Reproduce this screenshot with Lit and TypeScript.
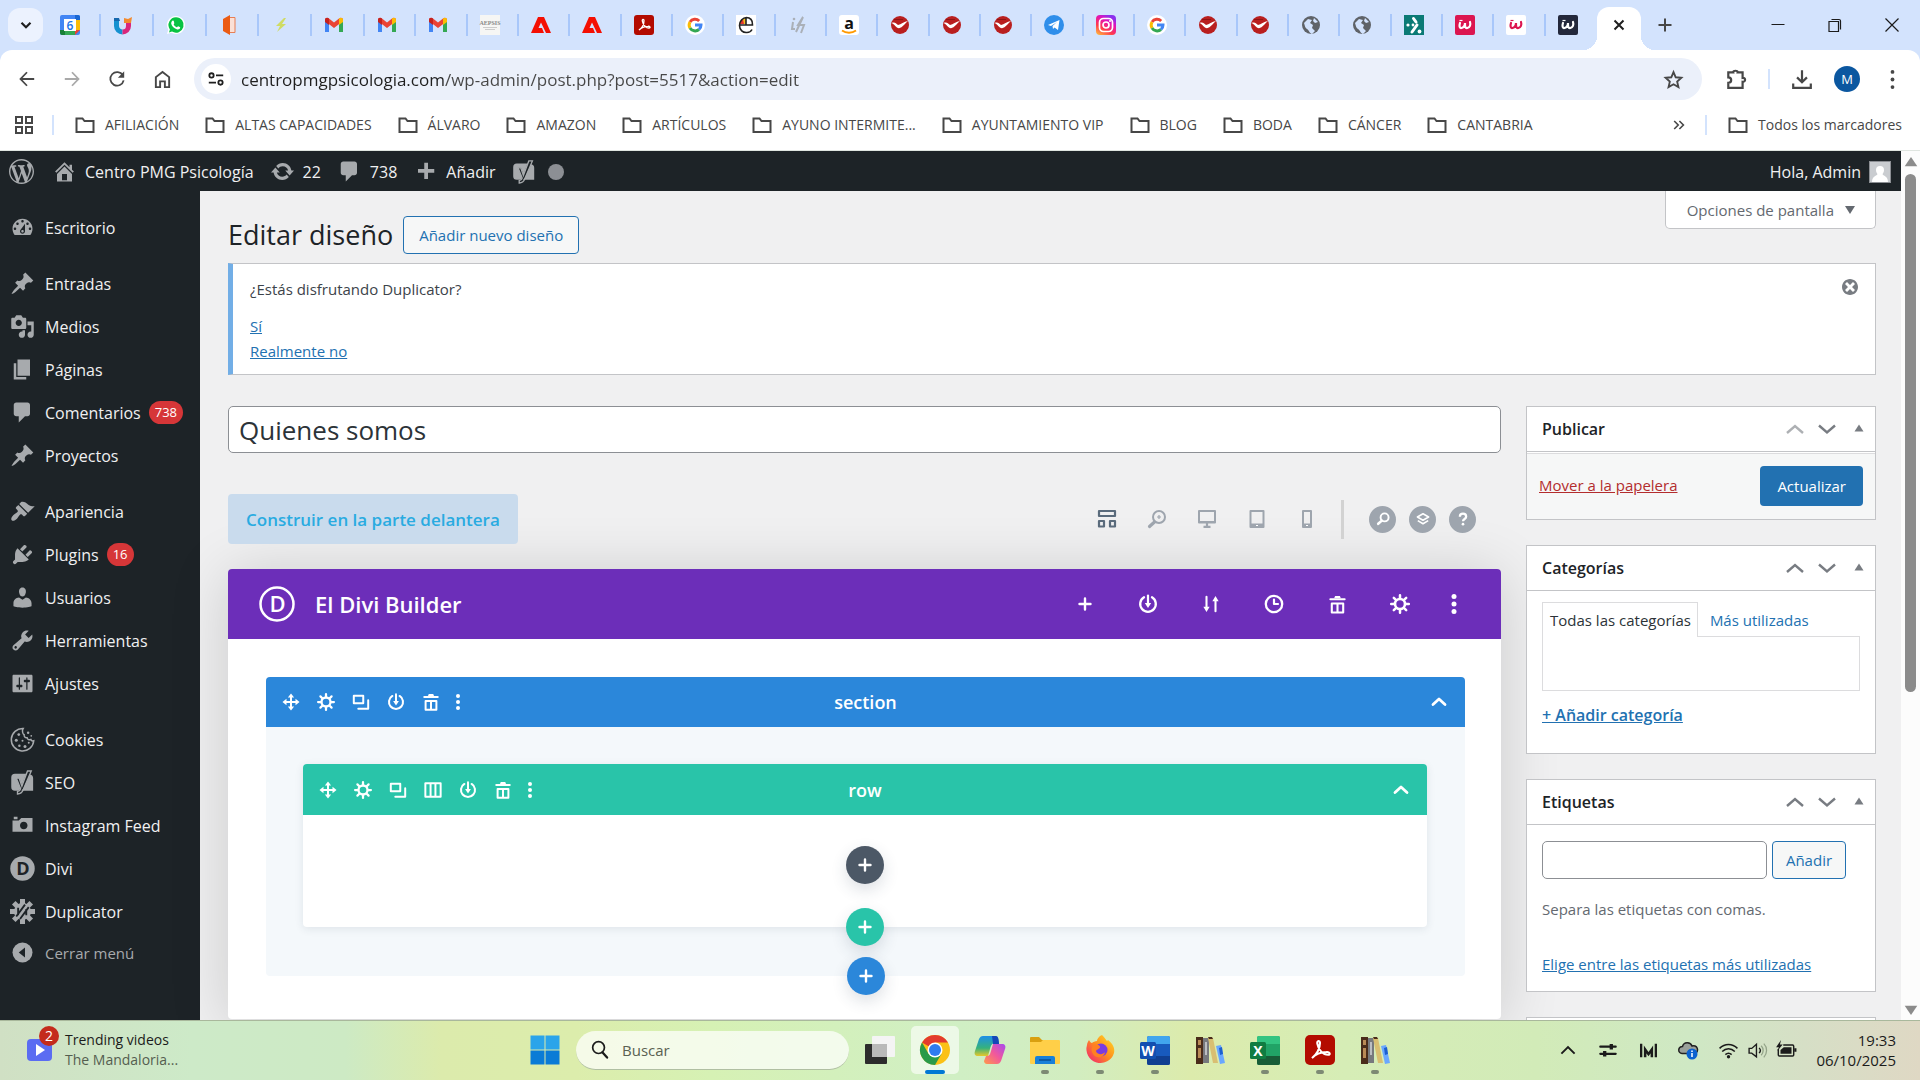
import { LitElement, html, svg, css, TemplateResult } from "lit";
import { customElement, state } from "lit/decorators.js";

type Shape = unknown;

const icon = (body: Shape, size = 20, box = 20): TemplateResult =>
  html`<svg width=${size} height=${size} viewBox="0 0 ${box} ${box}" fill="currentColor" aria-hidden="true">${body}</svg>`;

const p = (d: string) => svg`<path d=${d} fill-rule="evenodd"/>`;
const line = (d: string, w = 2) =>
  svg`<path d=${d} fill="none" stroke="currentColor" stroke-width=${w}/>`;
const round = (d: string, w = 2) =>
  svg`<path d=${d} fill="none" stroke="currentColor" stroke-width=${w} stroke-linecap="round" stroke-linejoin="round"/>`;

/* ---------- favicons, drawn in a 20 x 20 box ---------- */
const gmail = svg`<path d="M1 17V5l4 3v9H2z" fill="#4285f4"/><path d="M19 17V5l-4 3v9h3z" fill="#34a853"/><path d="M1 5c0-2 2-3 4-1.500l5 4 5-4C17 2 19 3 19 5v1l-9 7-9-7z" fill="#ea4335"/><path d="M15 3.500C17 2 19 3 19 5v2l-4 3z" fill="#fbbc04"/><path d="M5 3.500C3 2 1 3 1 5v2l4 3z" fill="#c5221f"/>`;
const adobe = svg`<path d="M0 18 7 2h6l7 16h-5L10 7.500 7.500 13H11l2 5z" fill="#f40f02"/>`;
const swirl = (x: string, y: string, d: string) => svg`<path d=${d} fill="none" stroke="#fff" stroke-width="1.300" transform="translate(${x} ${y})"/>`;
const acroCurve = "M5 14C8 12 10 8 10 4.500 10 3 8 3 8.300 5 9 9 12 12 15 12c2 0 1-2-1-1.700C10 10.500 7 12 5 14z";
const acrobat = svg`<rect width="20" height="20" rx="3" fill="#b30b00"/>${swirl("0", "1", acroCurve)}`;
const google = svg`<circle cx="10" cy="10" r="10" fill="#fff"/><g fill="none" stroke-width="3"><path d="M14.200 6A6 6 0 0 0 5 7" stroke="#ea4335"/><path d="M5 7a6 6 0 0 0 0 6" stroke="#fbbc04"/><path d="M5 13a6 6 0 0 0 9 1.500" stroke="#34a853"/><path d="M14 14.500A6 6 0 0 0 16 10h-6" stroke="#4285f4"/></g>`;
const redSwoosh = svg`<circle cx="10" cy="10" r="9" fill="#b91f1f"/><path d="M1.500 8C5 6.500 6.500 9 8 10c3-.5 6-3.500 10-4-3 2.500-5.500 6.500-9 7.200C6 13.200 4.500 9 1.500 8z" fill="#fff"/><path d="M4 4.500h9" stroke="#8f1414"/>`;
const globe = svg`<circle cx="10" cy="10" r="9" fill="#5f6368"/><path d="M3 8l4-4 4 1-2 3 3 2-1 3 3 3-3 3c-2 0-3-4-5-5S4 11 3 8zM13 3l4 4-3 1-2-2z" fill="#d3e3fd"/>`;
const wTile = (bg: string, fg: string) => svg`<rect width="20" height="20" rx="2" fill=${bg}/><path d="M5 8c-1 3-.5 5.500 1.500 5S10 11 10 8c-.2 3 .3 5.500 2.300 5C14.800 12.400 16 10 15 7" fill="none" stroke=${fg} stroke-width="2.200" stroke-linecap="round"/><path d="M4.500 5.500h3" stroke=${fg} stroke-width="1.200"/>`;

const favicons: [string, Shape][] = [
  ["Calendario", svg`<rect width="20" height="20" rx="2" fill="#4285f4"/><path d="M15 0h3a2 2 0 0 1 2 2v3h-5z" fill="#1967d2"/><path d="M15 5h5v10h-5z" fill="#fbbc04"/><path d="M5 15h10v5H5z" fill="#34a853"/><path d="M0 15h5v5H2a2 2 0 0 1-2-2z" fill="#188038"/><path d="M15 15h5l-5 5z" fill="#ea4335"/><path d="M4 4h12v12H4z" fill="#fff"/><text x="10" y="14.500" font-size="12" font-weight="600" text-anchor="middle" font-family="Open Sans,sans-serif" fill="#1a73e8">6</text>`],
  ["Uned", svg`<path d="M3.500 3v8a6 6 0 0 0 6 6" fill="none" stroke="#1591d0" stroke-width="5"/><path d="M9.500 17a6 6 0 0 0 6-6V8" fill="none" stroke="#d9277b" stroke-width="5"/><path d="M11 8V3l4 1 4-2-1 6z" fill="#f28a2e"/><path d="M1 3h5l1 3H1z" fill="#1668ad"/>`],
  ["WhatsApp", svg`<path d="M10 1a9 9 0 1 1-4.500 16.800L1 19l1.300-4.300A9 9 0 0 1 10 1z" fill="#fff"/><path d="M10 2.300a7.700 7.700 0 1 1-4 14.300l-3 .8.900-3A7.700 7.700 0 0 1 10 2.300z" fill="#08c343"/><path d="M7 5.500c1 0 1 2 1.300 2.500S7.500 9 7.700 9.500c.8 1.500 1.800 2.300 3 2.800.5 0 1-1.200 1.500-1.100l2 1c0 2-2 2.500-3.500 2C8 13.500 5.500 11 5.200 8.500 5.200 7 6 5.500 7 5.500z" fill="#fff"/>`],
  ["Office", svg`<path d="M4 4l7-4v20l-7-4z" fill="#eb5b13"/><path d="M11 2.500h5v15h-5" fill="#fbe0d6" stroke="#e77f55"/>`],
  ["Rayo", svg`<path d="M13 3 5 11h4l-3 6 9-8h-4l4-6z" fill="#cfdc64"/>`],
  ["Gmail", gmail], ["Gmail", gmail], ["Gmail", gmail],
  ["Aepsis", svg`<rect width="20" height="20" fill="#f6f6f4"/><text x="10" y="10" font-size="6" font-weight="700" text-anchor="middle" font-family="Liberation Serif,serif" fill="#888">AEPSIS</text><path d="M3 12.500h14M5 14.500h10" stroke="#ccc"/>`],
  ["Adobe", adobe], ["Adobe", adobe], ["Acrobat", acrobat], ["Google", google],
  ["Escuela", svg`<rect width="20" height="20" fill="#fff"/><path d="M10 3a7 7 0 0 0-6.500 6H10z" fill="#f2c021"/><path d="M4 7a7 7 0 0 1 3-3l1 5H4z" fill="#e3342f"/><path d="M3 10h13.500C17 5 14 2.500 10.500 2.500S3.500 6 3.500 10.500 7 18 11 17.500c2 0 4-1 5-3M10 2.500V10" fill="none" stroke="#222" stroke-width="1.600"/>`],
  ["Is", svg`<g fill="none" stroke="#aab0b8" stroke-width="2"><path d="M5 7l-1 7h3M8 17 15 2M15 2l-5 8h6l-3 8"/></g><circle cx="6" cy="4" r="1.300" fill="#aab0b8"/>`],
  ["Amazon", svg`<rect width="20" height="20" rx="3" fill="#fff"/><text x="10" y="13.500" font-size="16" font-weight="700" text-anchor="middle" font-family="Open Sans,sans-serif" fill="#111">a</text><path d="M3 15.500c4 3 10 3 14 0" fill="none" stroke="#f90" stroke-width="1.800"/>`],
  ["Video", redSwoosh], ["Video", redSwoosh], ["Video", redSwoosh],
  ["Telegram", svg`<circle cx="10" cy="10" r="10" fill="#2f8eea"/><path d="M4 10 15.500 5 14 15l-3.500-2.500L9 14l-.5-3L13 7l-6 4z" fill="#fff"/>`],
  ["Instagram", svg`<linearGradient id="ig" x1="0" y1="1" x2=".6" y2="0"><stop offset="0" stop-color="#ffc83d"/><stop offset=".4" stop-color="#ff3a4c"/><stop offset=".75" stop-color="#e312b8"/><stop offset="1" stop-color="#8a30ee"/></linearGradient><rect width="20" height="20" rx="4" fill="url(#ig)"/><g fill="none" stroke="#fff" stroke-width="1.700"><rect x="3.500" y="3.500" width="13" height="13" rx="4"/><circle cx="10" cy="10" r="3"/></g><circle cx="14" cy="6" r="1" fill="#fff"/>`],
  ["Google", google], ["Video", redSwoosh], ["Video", redSwoosh], ["Web", globe], ["Web", globe],
  ["Psicología", svg`<rect width="20" height="20" fill="#0b7a75"/><g stroke="#fff" stroke-width="3" stroke-linecap="round"><path d="M9.500 3.500 12 7M13 10l-5 7"/></g><g fill="#fff"><circle cx="4" cy="10" r="1.600"/><circle cx="9" cy="10" r="1.400"/><circle cx="15.500" cy="16.500" r="1.900"/></g>`],
  ["W", wTile("#dc1650", "#fff")], ["W", wTile("#fff", "#dc1650")], ["W", wTile("#23283b", "#fff")],
];

const bookmarks = ["AFILIACIÓN", "ALTAS CAPACIDADES", "ÁLVARO", "AMAZON", "ARTÍCULOS", "AYUNO INTERMITE...", "AYUNTAMIENTO VIP", "BLOG", "BODA", "CÁNCER", "CANTABRIA"];
const folder = icon(line("M1.500 3.500h6l2 2.500h9v11h-17z", 2), 20);

/* ---------- admin icons ---------- */
const A = {
  wp: p("M20 10c0-5.510-4.490-10-10-10C4.480 0 0 4.490 0 10c0 5.520 4.480 10 10 10 5.510 0 10-4.480 10-10zM7.780 15.370L4.370 6.220c.55-.02 1.170-.08 1.170-.08.5-.06.44-1.130-.06-1.110 0 0-1.450.11-2.370.11-.18 0-.37 0-.58-.01C4.120 2.690 6.870 1.110 10 1.110c2.330 0 4.450.87 6.050 2.340-.68-.11-1.650.39-1.650 1.580 0 .74.45 1.360.9 2.100.35.61.55 1.360.55 2.460 0 1.490-1.400 5-1.400 5l-3.030-8.370c.54-.02.82-.17.82-.17.5-.05.44-1.250-.06-1.220 0 0-1.440.12-2.380.12-.87 0-2.330-.12-2.330-.12-.5-.03-.56 1.200-.06 1.220l.92.08 1.260 3.410zM17.410 10c.24-.64.74-1.870.43-4.250.7 1.290 1.050 2.710 1.050 4.250 0 3.290-1.730 6.240-4.400 7.780.97-2.590 1.940-5.200 2.920-7.780zM6.100 18.090C3.120 16.650 1.110 13.530 1.110 10c0-1.300.23-2.480.72-3.590C3.250 10.300 4.670 14.200 6.100 18.090zm4.030-6.630l2.580 6.980c-.86.29-1.760.45-2.710.45-.79 0-1.570-.11-2.290-.33.81-2.380 1.620-4.740 2.420-7.100z"),
  home: p("M16 8.500l1.530 1.530-1.060 1.060L10 4.600l-6.470 6.490-1.060-1.060L10 2.500l4 4v-2h2v4zm-6-2.460l6 5.990V18H4v-5.970zM12 17v-5H8v5h4z"),
  update: p("M10.200 3.280c3.530 0 6.430 2.610 6.920 6h2.080l-3.500 4-3.500-4h2.320c-.45-1.970-2.210-3.450-4.320-3.450-1.450 0-2.730.71-3.540 1.780L4.950 5.660C6.230 4.200 8.110 3.280 10.200 3.280zm-.4 13.440c-3.520 0-6.430-2.610-6.920-6H.8l3.500-4c1.170 1.330 2.330 2.670 3.500 4H5.480c.45 1.970 2.210 3.450 4.320 3.450 1.450 0 2.730-.71 3.540-1.780l1.710 1.950c-1.280 1.460-3.150 2.380-5.250 2.380z"),
  plus: p("M17 8v3h-5v5H9v-5H4V8h5V3h3v5h5z"),
  dash: p("M3.760 16h12.480c1.100-1.370 1.760-3.110 1.760-5 0-4.420-3.580-8-8-8s-8 3.580-8 8c0 1.890.66 3.630 1.760 5zM10 4c.55 0 1 .45 1 1s-.45 1-1 1-1-.45-1-1 .45-1 1-1zM6 6c.55 0 1 .45 1 1s-.45 1-1 1-1-.45-1-1 .45-1 1-1zm8 0c.55 0 1 .45 1 1s-.45 1-1 1-1-.45-1-1 .45-1 1-1zm-5.370 5.550L12 7v6c0 1.100-.9 2-2 2s-2-.9-2-2c0-.57.24-1.080.63-1.450zM4 10c.55 0 1 .45 1 1s-.45 1-1 1-1-.45-1-1 .45-1 1-1zm12 0c.55 0 1 .45 1 1s-.45 1-1 1-1-.45-1-1 .45-1 1-1zm-5 3c0-.55-.45-1-1-1s-1 .45-1 1 .45 1 1 1 1-.45 1-1z"),
  pin: p("M10.440 3.020l1.820-1.820 6.360 6.350-1.830 1.820c-1.050-.68-2.480-.57-3.410.36l-.75.75c-.92.93-1.040 2.350-.35 3.410l-1.830 1.820-2.410-2.410-2.800 2.790c-.42.42-3.380 2.710-3.800 2.290s1.860-3.390 2.280-3.810l2.790-2.790L4.100 9.360l1.830-1.820c1.050.69 2.480.57 3.400-.36l.75-.75c.93-.92 1.050-2.350.36-3.410z"),
  media: p("M13 11V4c0-.55-.45-1-1-1h-1.670L9 1H5L3.670 3H2c-.55 0-1 .45-1 1v7c0 .55.45 1 1 1h10c.55 0 1-.45 1-1zM7 4.500c1.380 0 2.500 1.120 2.500 2.500S8.380 9.500 7 9.500 4.500 8.380 4.500 7 5.620 4.500 7 4.500zM14 6h5v10.500c0 1.380-1.120 2.500-2.500 2.500S14 17.880 14 16.500s1.120-2.500 2.500-2.500c.17 0 .34.02.5.05V9h-3V6zm-4 8.050V13h2v3.500c0 1.380-1.120 2.500-2.500 2.500S7 17.880 7 16.500 8.120 14 9.500 14c.17 0 .34.02.5.05z"),
  page: p("M6 15V2h10v13H6zm-1 1h8v2H3V5h2v11z"),
  comment: p("M5 2h9c1.100 0 2 .9 2 2v7c0 1.100-.9 2-2 2h-2l-5 5v-5H5c-1.100 0-2-.9-2-2V4c0-1.100.9-2 2-2z"),
  look: p("M14.480 11.060L7.410 3.990l1.500-1.500c.5-.56 2.300-.47 3.510.32 1.210.8 1.430 1.280 2.910 2.100 1.180.64 2.450 1.260 4.450.85zm-.71.71L6.700 4.700 4.930 6.470c-.39.39-.39 1.020 0 1.410l1.060 1.060c.39.39.39 1.030 0 1.420-.6.6-1.430 1.110-2.210 1.690-.35.26-.7.53-1.010.84C1.430 14.230.4 16.080 1.400 17.070c.99 1 2.840-.03 4.180-1.360.31-.31.58-.66.85-1.020.57-.78 1.080-1.610 1.690-2.210.39-.39 1.020-.39 1.410 0l1.060 1.060c.39.39 1.020.39 1.410 0z"),
  plug: p("M13.110 4.360L9.870 7.600 8 5.730l3.240-3.240c.35-.34 1.050-.2 1.560.32.52.51.66 1.210.31 1.550zm-8 1.770l.91-1.120 9.010 9.010-1.190.84c-.71.71-2.630 1.160-3.820 1.160H6.140L4.900 17.260c-.59.59-1.540.59-2.120 0-.59-.58-.59-1.530 0-2.120l1.240-1.240v-3.880c0-1.130.4-3.190 1.090-3.890zm7.260 3.970l3.240-3.240c.34-.35 1.040-.21 1.550.31.52.51.66 1.210.31 1.550l-3.240 3.250z"),
  user: p("M10 9.250c-2.270 0-2.730-3.440-2.730-3.440C7 4.020 7.820 2 9.970 2c2.160 0 2.980 2.020 2.710 3.810 0 0-.41 3.440-2.680 3.440zm0 2.570L12.720 10c2.390 0 4.520 2.330 4.520 4.530v2.490s-3.650 1.130-7.240 1.130c-3.650 0-7.240-1.130-7.240-1.130v-2.490c0-2.250 1.940-4.480 4.470-4.480z"),
  tool: p("M16.680 9.770c-1.340 1.340-3.300 1.670-4.950.99l-5.410 6.520c-.99.99-2.590.99-3.580 0s-.99-2.590 0-3.570l6.520-5.420c-.68-1.650-.35-3.610.99-4.950 1.280-1.280 3.120-1.620 4.720-1.060l-2.890 2.890 2.820 2.820 2.860-2.870c.53 1.580.18 3.390-1.080 4.650zM3.810 16.210c.4.39 1.040.39 1.430 0 .4-.4.4-1.040 0-1.430-.39-.4-1.030-.4-1.430 0-.39.39-.39 1.030 0 1.430z"),
  settings: p("M18 16V4c0-.55-.45-1-1-1H3c-.55 0-1 .45-1 1v12c0 .55.45 1 1 1h14c.55 0 1-.45 1-1zM8 11h1c.55 0 1 .45 1 1s-.45 1-1 1H8v1.500c0 .28-.22.5-.5.5s-.5-.22-.5-.5V13H6c-.55 0-1-.45-1-1s.45-1 1-1h1V5.500c0-.28.22-.5.5-.5s.5.22.5.5V11zm5-2h-1c-.55 0-1-.45-1-1s.45-1 1-1h1V5.500c0-.28.22-.5.5-.5s.5.22.5.5V7h1c.55 0 1 .45 1 1s-.45 1-1 1h-1v5.500c0 .28-.22.5-.5.5s-.5-.22-.5-.5V9z"),
  cookie: svg`<path d="M10.500 1.200A9 9 0 1 0 19 11c-1 .3-2-.2-2.300-1-1.200.7-2.800 0-3-1.400-1.500.2-2.700-1-2.400-2.400-1.300-.7-1.800-3.500-.8-5z" fill="none" stroke="currentColor" stroke-width="1.200"/><circle cx="7" cy="6" r="1.100"/><circle cx="5" cy="10.500" r="1.200"/><circle cx="10" cy="11" r=".8"/><circle cx="7.500" cy="15" r="1"/><circle cx="12" cy="15.500" r="1.200"/><circle cx="15" cy="12.500" r=".8"/><circle cx="14.500" cy="4.500" r="1"/><circle cx="17" cy="7" r=".7"/>`,
  yoast: svg`<path d="M4 3h9L9.500 12 7.500 6.500H5l3.300 8.300c-.3 1-1 1.500-2 1.700H4a3 3 0 0 1-3-3V6a3 3 0 0 1 3-3z"/><path d="M16 3.500c1.800.4 2.500 1.500 2.500 3v10h-9.500c.8-.5 1.500-1.500 2-2.500z"/><path d="M14 .8h3L10.500 16c-.8 2-2 3-4.500 3.200v-2c1.500-.2 2.200-1 2.500-2.200L5 6.500h2.300L9.500 13z" fill="none" stroke="currentColor" stroke-width="1.100"/>`,
  camera: p("M6 5V3H3v2h3zm12 10V4H9L7 6H2v9h16zm-7-8c1.660 0 3 1.340 3 3s-1.340 3-3 3-3-1.340-3-3 1.340-3 3-3z"),
  divi: svg`<circle cx="10" cy="10" r="9.800"/><text x="10.300" y="15.200" font-size="14.500" font-weight="700" text-anchor="middle" font-family="Open Sans,sans-serif" fill="#1d2327">D</text>`,
  dup: svg`<circle cx="10" cy="10" r="6.800"/><path d="M10 0v20M0 10h20M3 3l14 14M17 3 3 17" stroke="currentColor" stroke-width="4"/><path d="M5 14 12 4.500M8 16l7-9.500M6.500 7v6M13 8v5" stroke="#1d2327" stroke-width="1.500"/>`,
  close: svg`<circle cx="10" cy="10" r="8"/><path d="M12 6v8l-5-4z" fill="#1d2327"/>`,
  dismiss: p("M10 2c4.420 0 8 3.580 8 8s-3.580 8-8 8-8-3.580-8-8 3.580-8 8-8zm5 11l-3-3 3-3-2-2-3 3-3-3-2 2 3 3-3 3 2 2 3-3 3 3z"),
};

interface MenuEntry { label: string; shape: Shape; count?: number; }
const menu: MenuEntry[][] = [
  [{ label: "Escritorio", shape: A.dash }],
  [{ label: "Entradas", shape: A.pin }, { label: "Medios", shape: A.media }, { label: "Páginas", shape: A.page }, { label: "Comentarios", shape: A.comment, count: 738 }, { label: "Proyectos", shape: A.pin }],
  [{ label: "Apariencia", shape: A.look }, { label: "Plugins", shape: A.plug, count: 16 }, { label: "Usuarios", shape: A.user }, { label: "Herramientas", shape: A.tool }, { label: "Ajustes", shape: A.settings }],
  [{ label: "Cookies", shape: A.cookie }, { label: "SEO", shape: A.yoast }, { label: "Instagram Feed", shape: A.camera }, { label: "Divi", shape: A.divi }, { label: "Duplicator", shape: A.dup }],
];

/* ---------- builder icons ---------- */
const B = {
  plus: round("M10 4.500v11M4.500 10h11", 2.4),
  move: svg`<path d="M10 4v12M4 10h12" stroke="currentColor" stroke-width="2.200"/><path d="M10 .5l3.500 4.500h-7zM10 19.500l3.500-4.500h-7zM.5 10 5 6.500v7zM19.500 10 15 6.500v7z"/>`,
  gear: svg`<circle cx="10" cy="10" r="5" fill="none" stroke="currentColor" stroke-width="2.600"/><path d="M10 1.200v3M10 15.800v3M1.200 10h3M15.800 10h3M3.800 3.800l2.100 2.100M14.100 14.100l2.100 2.100M3.800 16.200l2.100-2.100M14.100 5.900l2.100-2.100" stroke="currentColor" stroke-width="2.500" stroke-linecap="round"/>`,
  copy: svg`<path d="M2 3h10.500v8.500H2z" fill="none" stroke="currentColor" stroke-width="2.200" stroke-linejoin="round"/><path d="M18 8v9.500H7" fill="none" stroke="currentColor" stroke-width="2.200" stroke-linecap="round" stroke-linejoin="round"/>`,
  save: svg`<path d="M6 3.300a7.800 7.800 0 1 0 8 0" fill="none" stroke="currentColor" stroke-width="2.300" stroke-linecap="round"/><path d="M10 1.500v8" stroke="currentColor" stroke-width="2.200" stroke-linecap="round"/><path d="M6.800 9h6.400L10 14z"/>`,
  trash: svg`<path d="M2.500 4.500h15" stroke="currentColor" stroke-width="2.200" stroke-linecap="round"/><path d="M7.500 1h5l1 2.500h-7z"/><path d="M4 9h12v9.500H4zM10 9v9" fill="none" stroke="currentColor" stroke-width="2.200" stroke-linejoin="round"/>`,
  columns: svg`<path d="M1.500 2.500h17v15h-17zM7.300 3v14M12.700 3v14" fill="none" stroke="currentColor" stroke-width="2.200" stroke-linejoin="round"/>`,
  sort: svg`<path d="M5 2v13M15 18V5" stroke="currentColor" stroke-width="2.300" stroke-linecap="round"/><path d="M1.500 13h7L5 19zM11.500 7h7L15 1z"/>`,
  clock: svg`<circle cx="10" cy="10" r="8.200" fill="none" stroke="currentColor" stroke-width="2.300"/>${round("M10 5.500V10h4", 2.2)}`,
  up: round("M4 12.500 10 7l6 5.500", 2.8),
  wire: svg`<g fill="none" stroke="currentColor" stroke-width="2.200" stroke-linejoin="round"><path d="M2 2h16v5H2zM2 12h5v5.500H2zM13 12h5v5.500h-5z"/></g>`,
  zoom: svg`<circle cx="12" cy="8" r="6" fill="none" stroke="currentColor" stroke-width="2"/><path d="M7.500 13 2.500 17.500" stroke="currentColor" stroke-width="3.200" stroke-linecap="round"/><path d="M12 6v4M10 8h4" stroke="currentColor" stroke-width="1.200"/>`,
  desktop: svg`<path d="M2 2h16v11.500H2z" fill="none" stroke="currentColor" stroke-width="2" stroke-linejoin="round"/><path d="M10 13v4M2 13h16M6.500 17.800h7" stroke="currentColor" stroke-width="2.200"/>`,
  tablet: svg`<path d="M3.500 2h13v16h-13z" fill="none" stroke="currentColor" stroke-width="2" stroke-linejoin="round"/><path d="M3.500 16h13" stroke="currentColor" stroke-width="3"/><path d="M9 16.500h2" stroke="#fff"/>`,
  phone: svg`<path d="M6 2h8v16H6z" fill="none" stroke="currentColor" stroke-width="2" stroke-linejoin="round"/><path d="M6 16h8" stroke="currentColor" stroke-width="3"/><path d="M9 16.500h2" stroke="#fff"/>`,
  find: svg`<circle cx="12" cy="8" r="5" fill="none" stroke="currentColor" stroke-width="2.400"/><path d="M8.500 12 4 16" stroke="currentColor" stroke-width="3.200" stroke-linecap="round"/>`,
  layers: svg`<path d="M10 3.500 17 7.500l-7 4-7-4zM3.500 12 10 16l6.500-4" fill="none" stroke="currentColor" stroke-width="2" stroke-linejoin="round"/>`,
  help: svg`<path d="M6.500 7.500C6.500 3 13.500 3 13.500 7.500c0 2.500-3.500 2.500-3.500 5" fill="none" stroke="currentColor" stroke-width="2.500"/><circle cx="10" cy="15.800" r="1.500"/>`,
};
const dots = (size: number) => html`<svg width="6" height=${size} viewBox="0 0 6 20" fill="currentColor" aria-hidden="true"><circle cx="3" cy="2.500" r="2.500"/><circle cx="3" cy="10" r="2.500"/><circle cx="3" cy="17.500" r="2.500"/></svg>`;

const tool = (label: string, body: unknown, cls = "tool") => html`<button class=${cls} type="button" aria-label=${label}>${body}</button>`;

/* ---------- taskbar icons, drawn in a 32 x 32 box ---------- */
const books = svg`<path d="M2 3h7v27H2z" fill="#4a2c1a"/><path d="M4 6h3v5H4zM4 14h3v10H4z" fill="#b98a55"/><path d="M9 4h6v25H9z" fill="#77797d"/><path d="M11 8h2v13h-2z" fill="#bcbec2"/><path d="M14 4h5l5 25h-5z" fill="#d9bf72"/><path d="M14 3h4l1 2h-4z" fill="#4a2c1a"/><path d="M22 12l5-1 4 18-5 1z" fill="#69a7ff"/><path d="M25 14l3-1 1 7-3 1z" fill="#1c5fd0"/>`;
const office = (dark: string, mid: string, light: string, tile: string, letter: string) =>
  svg`<rect x="8" y="2" width="23" height="29" rx="2" fill=${mid}/><path d="M8 4a2 2 0 0 1 2-2h19a2 2 0 0 1 2 2v6H8z" fill=${light}/><path d="M8 22h23v7a2 2 0 0 1-2 2H10a2 2 0 0 1-2-2z" fill=${dark}/><rect x="1" y="8" width="16" height="17" rx="1.500" fill=${tile}/><text x="9" y="21.500" font-size="14" font-weight="700" text-anchor="middle" font-family="Open Sans,sans-serif" fill="#fff">${letter}</text>`;
const apps: { name: string; shape: Shape; mark?: string }[] = [
  { name: "Vista de tareas", shape: svg`<rect x="1" y="10" width="22" height="20" rx="1" fill="#2c2c2c"/><rect x="8" y="2" width="23" height="21" rx="1" fill="#f4f4f4"/><path d="M8 10h15v13H9a1 1 0 0 1-1-1z" fill="#b9b9b9"/>` },
  { name: "Chrome", mark: "current", shape: svg`<circle cx="16" cy="16" r="15" fill="#fbc116"/><path d="M16 16 3 8.500a15 15 0 0 1 26 0H16z" fill="#e33b2e"/><path d="M3 8.500A15 15 0 0 0 16 31l6.500-11.300L16 23l-6.500-3.300z" fill="#2a9a49"/><circle cx="16" cy="16" r="7.500" fill="#fff"/><circle cx="16" cy="16" r="6" fill="#2f7bf0"/>` },
  { name: "Copilot", shape: svg`<linearGradient id="ca" x1="0" y1="0" x2="0" y2="1"><stop offset="0" stop-color="#1d8fe8"/><stop offset=".6" stop-color="#35b27c"/><stop offset="1" stop-color="#e8c82a"/></linearGradient><linearGradient id="cb" x1="1" y1="0" x2="0" y2="1"><stop offset="0" stop-color="#a64bf0"/><stop offset=".5" stop-color="#f2599a"/><stop offset="1" stop-color="#ff9a4a"/></linearGradient><path d="M9 2h12c2 0 3 2 3 4l-2 3c-4 0-5 2-6 6l-2 7H4c-3 0-4-2-3-5L5 5c1-2 2-3 4-3z" fill="url(#ca)"/><path d="M23 30H13c-2 0-3-2-3-3l2-5c4 0 4-2 5-5l2-7h9c3 0 4 2 3 5l-4 12c-1 2-2 3-4 3z" fill="url(#cb)"/><path d="M18 2h4c2 0 3 3 3 8h-6z" fill="#1447b8"/>` },
  { name: "Archivos", mark: "open", shape: svg`<path d="M1 4a1 1 0 0 1 1-1h8l3 3h16v8H1z" fill="#d9a010"/><path d="M1 8h11l2-2h16a1 1 0 0 1 1 1v22a1 1 0 0 1-1 1H2a1 1 0 0 1-1-1z" fill="#ffcf48"/><path d="M6 24a2 2 0 0 1 2-2h16a2 2 0 0 1 2 2v6H6z" fill="#1980d8"/><path d="M10 26h12" stroke="#0a4f96" stroke-width="1.500"/>` },
  { name: "Firefox", mark: "open", shape: svg`<linearGradient id="fx" x1="1" y1="0" x2="0" y2="1"><stop offset="0" stop-color="#ffe226"/><stop offset=".5" stop-color="#ff8a1e"/><stop offset="1" stop-color="#f0197d"/></linearGradient><path d="M18 1c3 3 4 5 5 6l1-1c5 4 7 8 6 13a14 14 0 1 1-27-8c0-2 1-3 2-5 1 2 2 3 3 3 1-1 3-2 5-2 0-2 2-5 5-6z" fill="url(#fx)"/><circle cx="17" cy="16" r="6.500" fill="#7a3be0"/><path d="M9 11c4-1 7 0 7 2s-3 2-4 4c1 4 7 4 9 1-1 7-11 7-13 0-1-3 0-5 1-7z" fill="#ff8022"/>` },
  { name: "Word", mark: "open", shape: office("#103f91", "#185abd", "#41a5ee", "#124fb0", "W") },
  { name: "Biblioteca", shape: books },
  { name: "Excel", mark: "open", shape: office("#185c37", "#21a366", "#33c481", "#107c41", "X") },
  { name: "Acrobat", mark: "open", shape: svg`<rect x="1" y="1" width="30" height="30" rx="5" fill="#b30b00"/><g transform="scale(1.600)">${swirl("0", "1", acroCurve)}</g>` },
  { name: "Biblioteca", mark: "open", shape: books },
];

const base = css`
  * { box-sizing: border-box; }
  svg { display: block; flex: none; overflow: visible; }
  button, input { font: inherit; color: inherit; margin: 0; }
  button { border: 0; padding: 0; background: none; display: inline-flex; align-items: center; justify-content: center; flex: none; }
  input { outline: 0; border-radius: 5px; }
  a { color: inherit; text-decoration: none; }
`;

@customElement("browser-chrome")
export class BrowserChrome extends LitElement {
  static styles = [base, css`
    :host { display: block; background: #d3e3fd; color: #474747; font-size: 14px; }
    .strip { display: flex; height: 50px; align-items: stretch; padding-left: 8px; }
    .search { width: 35px; height: 34px; margin: 8px 5px 0 0; border-radius: 12px; background: #ecf2fe; color: #1f1f1f; }
    .tabs { flex: 1; min-width: 0; display: grid; grid-template-columns: repeat(6, 105fr) repeat(24, 102fr); align-items: center; }
    .tab { height: 22px; width: 100%; justify-content: flex-start; padding-left: 12px; border-right: 2px solid #a8c7fa; }
    .tab:last-child { border-color: transparent; }
    .active { width: 44px; height: 43px; margin-top: 7px; padding-bottom: 7px; background: #fff; border-radius: 12px 12px 0 0; position: relative; color: #1f1f1f; }
    .active::before, .active::after { content: ""; position: absolute; bottom: 0; width: 14px; height: 14px; }
    .active::before { right: 100%; background: radial-gradient(circle at 0 0, transparent 14px, #fff 14px); }
    .active::after { left: 100%; background: radial-gradient(circle at 100% 0, transparent 14px, #fff 14px); }
    .new { width: 30px; margin-left: 9px; }
    .window { display: flex; margin-left: 69px; color: #1b1b1b; }
    .window button { width: 57px; }
    .panel { background: #fff; border-radius: 12px 12px 0 0; border-bottom: 1px solid #dfe5e0; height: 101px; }
    .bar { display: flex; align-items: center; gap: 17px; padding: 8px 13px 0 12px; height: 50px; }
    .nav { display: flex; gap: 15px; }
    .nav button, .act { width: 30px; height: 30px; }
    .off { color: #a9a9a9; }
    .omni { flex: 1; display: flex; align-items: center; height: 42px; border-radius: 21px; background: #ebf0fa; padding: 0 18px 0 7px; margin-right: 2px; }
    .site { width: 30px; height: 30px; border-radius: 50%; background: #fff; color: #1f1f1f; }
    .url { flex: 1; min-width: 0; border: 0; background: linear-gradient(90deg, #1f1f1f 213px, #474747 213px); background-clip: text; color: transparent; padding: 0 0 0 10px; font-size: 17px; height: 32px; }
    .rule { width: 2px; height: 20px; background: #d3e3fd; margin: 0; }
    .me { width: 26px; height: 26px; border-radius: 50%; background: #0b57a0; color: #fff; font-size: 13px; }
    .marks { display: flex; align-items: center; height: 50px; padding: 0 18px 0 14px; }
    .marks .rule { margin: 0 21px 0 18px; }
    .list { display: flex; gap: 26px; flex: 1; min-width: 0; }
    .mark { display: inline-flex; align-items: center; gap: 10px; white-space: nowrap; line-height: 20px; }
  `];
  render() {
    return html`
      <div class="strip">
        <button class="search" type="button" aria-label="Buscar pestañas">${icon(line("M5 7.500l5 5 5-5", 2.4), 18)}</button>
        <div class="tabs">${favicons.map(([name, shape]) => html`<button class="tab" type="button" aria-label=${name}>${icon(shape)}</button>`)}</div>
        <button class="active" type="button" aria-label="Cerrar pestaña">${icon(line("M5.500 5.500l9 9M14.500 5.500l-9 9", 2), 20)}</button>
        <button class="new" type="button" aria-label="Nueva pestaña">${icon(line("M10 3.500v13M3.500 10h13", 2))}</button>
        <div class="window">
          <button type="button" aria-label="Minimizar">${icon(line("M3.500 9.500h13", 1))}</button>
          <button type="button" aria-label="Restaurar">${icon(svg`${line("M4 6.500h9.500v10H4z", 1.200)}${line("M6.500 4.500H14a1.500 1.500 0 0 1 1.500 1.500v8.500", 1.200)}`, 20)}</button>
          <button type="button" aria-label="Cerrar">${icon(line("M3.500 3.500l13 13M16.500 3.500l-13 13", 1.200))}</button>
        </div>
      </div>
      <div class="panel">
        <div class="bar">
          <div class="nav">
            <button type="button" aria-label="Atrás">${icon(line("M18 10H3M10 2.500 2.800 10l7.200 7.500", 2), 18)}</button>
            <button type="button" class="off" aria-label="Adelante">${icon(line("M2 10h15M10 2.500l7.200 7.500-7.200 7.500", 2), 18)}</button>
            <button type="button" aria-label="Recargar">${icon(svg`${line("M16.500 6A7.500 7.500 0 1 0 17.400 11.500", 2)}<path d="M18 1.500v7h-7z"/>`, 18)}</button>
            <button type="button" aria-label="Inicio">${icon(line("M3 18V7.500L10 2l7 5.500V18h-4.500v-6h-5v6z", 2), 19)}</button>
          </div>
          <form class="omni">
            <button class="site" type="button" aria-label="Información del sitio">${icon(svg`${line("M10 6h8M2 14h8", 2)}<g fill="none" stroke="currentColor" stroke-width="2"><circle cx="5" cy="6" r="2.400"/><circle cx="15" cy="14" r="2.400"/></g>`, 18)}</button>
            <input class="url" aria-label="Dirección" value="centropmgpsicologia.com/wp-admin/post.php?post=5517&action=edit" />
            <button type="button" aria-label="Añadir a marcadores">${icon(line("M10 3l2.100 4.900 5.400.5-4 3.600 1.200 5.300L10 14.500l-4.700 2.800L6.500 12l-4-3.600 5.400-.5z", 1.8), 21)}</button>
          </form>
          <button class="act" type="button" aria-label="Extensiones">${icon(line("M3 4h4.500C7 2 12 2 11.500 4H16v5c3-.5 3 4 0 3.500V18H3v-4.500c3.500 0 3.500-5 0-5z", 2), 22)}</button>
          <span class="rule"></span>
          <button class="act" type="button" aria-label="Descargas">${icon(line("M10 2v10M5.500 8.500 10 13l4.500-4.500M2 14v4h16v-4", 2), 22)}</button>
          <button class="me" type="button" aria-label="Perfil">M</button>
          <button class="act" type="button" aria-label="Menú">${icon(svg`<circle cx="10" cy="2" r="2"/><circle cx="10" cy="10" r="2"/><circle cx="10" cy="18" r="2"/>`, 19)}</button>
        </div>
        <nav class="marks">
          <button type="button" aria-label="Grupos">${icon(line("M2 2h6v6H2zM12 2h6v6h-6zM2 12h6v6H2zM12 12h6v6h-6z", 2), 20)}</button>
          <span class="rule"></span>
          <div class="list">${bookmarks.map((b) => html`<a class="mark" href="#">${folder}${b}</a>`)}</div>
          <button type="button" aria-label="Más marcadores">${icon(line("M4 5l5 5-5 5M10.500 5l5 5-5 5", 2), 16)}</button>
          <span class="rule"></span>
          <a class="mark" href="#">${folder}Todos los marcadores</a>
        </nav>
      </div>`;
  }
}

@customElement("admin-bar")
export class AdminBar extends LitElement {
  static styles = [base, css`
    :host { display: flex; align-items: center; justify-content: space-between; height: 40px; background: #1d2327; color: #f0f0f1; padding: 1px 10px 0 9px; font-size: 16px; }
    .group, .item { display: flex; align-items: center; }
    .group { gap: 16px; }
    .item { gap: 8px; white-space: nowrap; }
    .wp { margin-right: 2px; }
    svg { color: #a7aaad; }
    .dot { width: 16px; height: 16px; border-radius: 50%; background: #8c8f94; }
    .seo { gap: 12px; }
    .face { background: #c9ccd0; border: 1px solid #8c8f94; color: #fff; }
  `];
  render() {
    return html`
      <div class="group">
        <a class="item wp" href="#" aria-label="WordPress">${icon(A.wp, 25)}</a>
        <a class="item" href="#">${icon(A.home, 25)}Centro PMG Psicología</a>
        <a class="item" href="#">${icon(A.update, 25)}22</a>
        <a class="item" href="#">${icon(A.comment, 25)}738</a>
        <a class="item" href="#">${icon(A.plus, 25)}Añadir</a>
        <a class="item seo" href="#" aria-label="SEO">${icon(A.yoast, 24)}<span class="dot"></span></a>
      </div>
      <a class="item" href="#">Hola, Admin
        <svg class="face" width="22" height="22" viewBox="0 0 20 20" fill="#fff" aria-hidden="true"><path d="M10 4a4 4 0 0 1 4 4c0 2-1 3.500-1.500 4 .5 2 5.500 2 5.500 8H2c0-6 5-6 5.500-8C7 11.500 6 10 6 8a4 4 0 0 1 4-4z"/></svg>
      </a>`;
  }
}

@customElement("admin-menu")
export class AdminMenu extends LitElement {
  static styles = [base, css`
    :host { display: block; width: 200px; flex: none; background: #1d2327; color: #f0f0f1; font-size: 16px; padding-top: 15px; }
    .block { margin-bottom: 13px; }
    .entry { display: flex; align-items: center; gap: 10px; height: 43px; padding-left: 10px; white-space: nowrap; }
    .entry svg { color: #a7aaad; }
    .count { background: #d63638; color: #fff; font-size: 13px; line-height: 23px; min-width: 23px; padding: 0 6px; border-radius: 12px; text-align: center; margin-left: -2px; }
    .fold { width: 100%; justify-content: flex-start; color: #a7aaad; font-size: 15px; margin-top: -15px; }
  `];
  render() {
    return html`<nav>
      ${menu.map((block) => html`<div class="block">${block.map((m) => html`
        <a class="entry" href="#">${icon(m.shape, 25)}${m.label}${m.count ? html`<span class="count">${m.count}</span>` : ""}</a>`)}</div>`)}
      <button class="entry fold" type="button">${icon(A.close, 25)}Cerrar menú</button>
    </nav>`;
  }
}

@customElement("divi-builder")
export class DiviBuilder extends LitElement {
  static styles = [base, css`
    :host { display: block; color: #fff; font-weight: 600; font-size: 17px; }
    .top { display: flex; align-items: center; justify-content: space-between; color: #9ea5ae; height: 50px; margin-bottom: 25px; }
    .front { background: #c9dbed; color: #29abe1; font-weight: 600; font-size: 17px; height: 50px; padding: 0 18px; border-radius: 4px; }
    .views { display: flex; align-items: center; gap: 30px; padding-right: 25px; }
    .on { color: #5a6b7c; }
    .rounds { display: flex; gap: 13px; border-left: 3px solid #d2d2d2; padding: 6px 0 6px 25px; margin-left: -6px; }
    .rounds button { width: 27px; height: 27px; border-radius: 50%; background: #9ea5ae; color: #fff; }
    .card { background: #fff; border-radius: 4px; box-shadow: 0 5px 60px rgba(0, 0, 0, 0.16); padding-bottom: 43px; }
    .head { display: flex; align-items: center; height: 70px; padding: 0 44px 0 31px; gap: 20px; background: #6c2eb9; border-radius: 4px 4px 0 0; }
    h2 { margin: 0; font-size: 22px; font-weight: 600; flex: 1; }
    .acts { display: flex; gap: 39px; }
    .acts .tool { min-width: 24px; }
    .acts .last { min-width: 6px; }
    .section { position: relative; margin: 38px 36px 0 38px; background: #f4f8fb; border-radius: 4px; padding-bottom: 49px; }
    .strip { display: grid; grid-template-columns: 1fr auto 1fr; align-items: center; height: 50px; padding: 0 16px; border-radius: 4px 4px 0 0; background: #2b87da; }
    .strip span { line-height: 24px; font-size: 18px; }
    .green { background: #29c4a9; height: 51px; }
    .set { display: flex; gap: 17px; }
    .set .tool:last-child { margin-left: -2px; }
    .fold { justify-self: end; }
    .row { position: relative; margin: 37px 38px 0 37px; background: #fff; border-radius: 4px; box-shadow: 0 2px 8px rgba(40, 60, 80, 0.1); }
    .slot { display: flex; justify-content: center; padding: 31px 0 43px; }
    .add { width: 38px; height: 38px; border-radius: 50%; background: #4c5866; box-shadow: 0 6px 16px rgba(43, 60, 90, 0.16); }
    .edge { position: absolute; left: 50%; bottom: 0; transform: translate(-50%, 50%); }
    .add.teal { background: #29c4a9; }
    .add.blue { background: #2b87da; }
  `];
  private set(columns: boolean) {
    return html`<div class="set">
      ${tool("Mover", icon(B.move, 18))}${tool("Ajustes", icon(B.gear, 18))}${tool("Duplicar", icon(B.copy, 18))}
      ${columns ? tool("Columnas", icon(B.columns, 18)) : ""}
      ${tool("Guardar", icon(B.save, 18))}${tool("Eliminar", icon(B.trash, 18))}${tool("Más", dots(16))}
    </div>`;
  }
  render() {
    return html`
      <div class="top">
        <button class="front" type="button">Construir en la parte delantera</button>
        <div class="views">
          ${tool("Estructura", icon(B.wire), "on")}${tool("Acercar", icon(B.zoom))}${tool("Escritorio", icon(B.desktop))}
          ${tool("Tableta", icon(B.tablet))}${tool("Teléfono", icon(B.phone))}
          <div class="rounds">${tool("Buscar", icon(B.find, 16))}${tool("Capas", icon(B.layers, 16))}${tool("Ayuda", icon(B.help, 18))}</div>
        </div>
      </div>
      <section class="card">
        <header class="head">
          <svg width="36" height="36" viewBox="0 0 36 36" aria-hidden="true"><circle cx="18" cy="18" r="16.500" fill="none" stroke="#fff" stroke-width="2.500"/><text x="18.500" y="26" font-size="22" font-weight="600" text-anchor="middle" font-family="Open Sans,sans-serif" fill="#fff">D</text></svg>
          <h2>El Divi Builder</h2>
          <div class="acts">
            ${tool("Añadir", icon(B.plus))}${tool("Guardar", icon(B.save))}${tool("Portabilidad", icon(B.sort, 18))}
            ${tool("Historial", icon(B.clock))}${tool("Vaciar", icon(B.trash, 19))}${tool("Ajustes", icon(B.gear, 20))}${tool("Más", dots(20), "last")}
          </div>
        </header>
        <div class="section">
          <div class="strip">${this.set(false)}<span>section</span><button class="fold" type="button" aria-label="Plegar">${icon(B.up)}</button></div>
          <div class="row">
            <div class="strip green">${this.set(true)}<span>row</span><button class="fold" type="button" aria-label="Plegar">${icon(B.up)}</button></div>
            <div class="slot">${tool("Añadir módulo", icon(B.plus, 20), "add")}</div>
            ${tool("Añadir fila", icon(B.plus, 20), "add teal edge")}
          </div>
          ${tool("Añadir sección", icon(B.plus, 20), "add blue edge")}
        </div>
      </section>`;
  }
}

@customElement("meta-boxes")
export class MetaBoxes extends LitElement {
  static styles = [base, css`
    :host { display: flex; flex-direction: column; gap: 25px; font-size: 15px; color: #2c3338; }
    .box { border: 1px solid #c3c4c7; background: #fff; }
    .head { display: flex; align-items: center; height: 45px; border-bottom: 1px solid #c3c4c7; padding: 0 6px 0 15px; color: #787c82; gap: 12px; }
    h2 { flex: 1; margin: 0; font-size: 16px; font-weight: 600; color: #1d2327; }
    .dim { opacity: 0.6; }
    .publish { display: flex; align-items: center; justify-content: space-between; background: #f6f7f7; border-top: 1px solid #dcdcde; margin-top: 1px; padding: 12px 12px 13px; }
    .trash { color: #b32d2e; text-decoration: underline; margin-top: -3px; }
    .primary { height: 40px; padding: 0 17px; background: #2271b1; color: #fff; border-radius: 4px; }
    .body { padding: 11px 15px 24px; }
    .tabs { display: flex; }
    .tab { height: 35px; line-height: 33px; padding: 0 6px 0 7px; border: 1px solid #dcdcde; border-bottom: 0; background: #fff; margin-bottom: -1px; position: relative; color: #2c3338; }
    .other { border-color: transparent; background: none; color: #2271b1; margin-left: 4px; }
    .pane { height: 55px; border: 1px solid #dcdcde; }
    .link { color: #2271b1; text-decoration: underline; line-height: 22px; display: inline-block; }
    .strong { font-weight: 600; font-size: 16px; margin: 13px 0 3px; }
    .tags { padding: 16px 15px; }
    .pair { display: flex; gap: 5px; margin-right: 14px; }
    .field { flex: 1; min-width: 0; height: 38px; border: 1px solid #8c8f94; background: #fff; padding: 0 10px; }
    .ghost { height: 38px; width: 74px; border: 1px solid #2271b1; color: #2271b1; background: #f6f7f7; border-radius: 4px; }
    p { margin: 19px 0 33px; line-height: 22px; color: #646970; }
    .empty { height: 45px; }
  `];
  private head(title: string, first = false) {
    return html`<header class="head"><h2>${title}</h2>
      <button class=${first ? "dim" : ""} type="button" aria-label="Subir">${icon(line("M2 14l8-7 8 7", 2.4))}</button>
      <button type="button" aria-label="Bajar">${icon(line("M2 6.500l8 7 8-7", 2.4))}</button>
      <button type="button" aria-label="Alternar">${icon(p("M10 5.500 14.500 12.500h-9z"))}</button>
    </header>`;
  }
  render() {
    return html`
      <section class="box">${this.head("Publicar", true)}
        <div class="publish"><a class="trash" href="#">Mover a la papelera</a><button class="primary" type="button">Actualizar</button></div>
      </section>
      <section class="box">${this.head("Categorías")}
        <div class="body">
          <div class="tabs"><button class="tab" type="button">Todas las categorías</button><button class="tab other" type="button">Más utilizadas</button></div>
          <div class="pane"></div>
          <a class="link strong" href="#">+ Añadir categoría</a>
        </div>
      </section>
      <section class="box">${this.head("Etiquetas")}
        <div class="tags">
          <div class="pair"><input class="field" aria-label="Añadir etiqueta" /><button class="ghost" type="button">Añadir</button></div>
          <p>Separa las etiquetas con comas.</p>
          <a class="link" href="#">Elige entre las etiquetas más utilizadas</a>
        </div>
      </section>
      <section class="box empty"></section>`;
  }
}

@customElement("task-bar")
export class TaskBar extends LitElement {
  static styles = [base, css`
    :host { display: grid; grid-template-columns: 1fr auto 1fr; align-items: center; height: 60px; flex: none; border-top: 1px solid #a9b89c; color: #1b1b1b; font-size: 14px; line-height: 20px; padding: 0 24px 1px;
      background: linear-gradient(90deg, #d0e0c4 0%, #cdeac8 10%, #cdeac4 18%, #dcebac 23%, #dcedac 30%, #d6f1b4 37%, #d0efc4 50%, #d2edc0 56%, #dcebac 62%, #d6edb6 70%, #d2ebb8 80%, #cfe8c4 88%, #d6dfc6 94%, #dfd8c4 100%); }
    .news { display: grid; grid-template-columns: 25px auto; column-gap: 13px; justify-self: start; text-align: left; justify-content: start; margin-left: 3px; }
    .sub { color: #555e50; }
    .pic { position: relative; }
    .badge { position: absolute; left: 12px; top: -13px; width: 20px; height: 20px; border-radius: 50%; background: #c42b1c; color: #fff; text-align: center; }
    .mid { display: flex; align-items: center; gap: 7px; }
    .app { width: 48px; height: 48px; border-radius: 5px; position: relative; }
    .current { background: rgba(255, 255, 255, 0.6); }
    .app::after { content: ""; position: absolute; bottom: 0; width: 8px; height: 4px; border-radius: 2px; }
    .open::after { background: #7d8a74; }
    .current::after { width: 20px; background: #0078d4; }
    .find { display: flex; align-items: center; gap: 13px; width: 273px; height: 39px; border-radius: 20px; background: rgba(255, 255, 255, 0.72); border-bottom: 1px solid #b0bfa2; padding: 0 14px; }
    .find input { border: 0; background: none; padding: 0; width: 100%; min-width: 0; font-size: 15px; }
    .find input::placeholder { color: #5a6152; opacity: 1; }
    .tray { display: flex; align-items: center; justify-self: end; gap: 16px; }
    .tray .tool { min-width: 24px; }
    .trio { display: flex; gap: 5px; }
    .when { text-align: right; margin-left: 2px; font-size: 15px; }
  `];
  render() {
    return html`
      <button class="news" type="button">
        <span class="pic"><svg width="25" height="22" viewBox="0 0 25 22" aria-hidden="true"><rect width="25" height="22" rx="4" fill="#5b6cf2"/><path d="M9 5l9 6-9 6z" fill="#fff"/></svg><span class="badge">2</span></span>
        <span>Trending videos<br /><span class="sub">The Mandaloria...</span></span>
      </button>
      <div class="mid">
        <button class="app" type="button" aria-label="Inicio">${icon(svg`<path d="M1.500 1.500h14v14h-14zM16.500 1.500h14v14h-14z" fill="#2aa4ea"/><path d="M1.500 16.500h14v14h-14zM16.500 16.500h14v14h-14z" fill="#0a7bd6"/>`, 32, 32)}</button>
        <label class="find">${icon(svg`<circle cx="9" cy="8" r="6.200" fill="none" stroke="currentColor" stroke-width="1.800"/>${round("M13 13l5 5.500", 2.4)}`, 19)}<input type="search" aria-label="Buscar" placeholder="Buscar" /></label>
        ${apps.map((a) => html`<button class="app ${a.mark ?? ""}" type="button" aria-label=${a.name}>${icon(a.shape, 32, 32)}</button>`)}
      </div>
      <div class="tray">
        ${tool("Mostrar iconos ocultos", icon(line("M4.500 13 10 7.500l5.500 5.500", 1.6), 24))}
        ${tool("Ajustes de sonido", icon(svg`${round("M3 7h14M3 13.500h14", 2)}${line("M13 4.500v5M7 11v5", 3)}`, 22))}
        ${tool("M", icon(svg`${line("M3 3.500v13M17 3.500v13", 2.2)}${line("M6.800 16.500V9l3.200 4.500L13.200 9v7.500", 2.4)}`, 21))}
        ${tool("OneDrive", icon(svg`<path d="M4 13.500a3.500 3.500 0 0 1 .5-7A5 5 0 0 1 14 6a3.800 3.800 0 0 1 3 7.500z" fill="#9aa09a" stroke="#222" stroke-width="1.500"/><circle cx="14" cy="14" r="5.500" fill="#0a62d0"/><path d="M14 13v4M14 10.500V12" stroke="#fff" stroke-width="1.500"/>`, 20))}
        <div class="trio">
          ${tool("Wifi", icon(svg`${line("M1.500 8c5-5 12-5 17 0M4 11c3.500-3.500 8.500-3.500 12 0M7 14c2-1.800 4-1.800 6 0", 1.5)}<circle cx="10" cy="16" r="1.600"/>`, 21))}
          ${tool("Volumen", icon(svg`${line("M2 8v4.500h2.500L9 16V4L4.500 8z", 1.3)}${line("M11.500 7.500c1.500 1.500 1.500 3.500 0 5", 1.3)}<path d="M13.500 5.500c2.500 2.500 2.500 6.500 0 9M16 3.500c3.500 3.500 3.500 9.500 0 13" fill="none" stroke="#93a388" stroke-width="1.200"/>`, 21))}
          ${tool("Batería", icon(svg`${line("M3 9v5.500a1 1 0 0 0 1 1h12a1 1 0 0 0 1-1v-8a1 1 0 0 0-1-1H7.500", 1.3)}<path d="M5 10l3-2.500h7v6H5zM17.500 8.500h2v3h-2zM5.500 1 1 7.500h2.500L2 11l5-6H4.500z"/>`, 22))}
        </div>
        <div class="when">19:33<br />06/10/2025</div>
      </div>`;
  }
}

@customElement("app-root")
export class AppRoot extends LitElement {
  static styles = [base, css`
    :host { display: flex; flex-direction: column; height: 100vh; overflow: hidden; font-family: "Open Sans", "Noto Sans", "Liberation Sans", sans-serif; background: #f0f0f1; color: #3c434a; }
    browser-chrome, admin-bar { flex: none; }
    .page { flex: 1; min-height: 0; display: flex; overflow: hidden; }
    .site { flex: 1; min-width: 0; display: flex; flex-direction: column; }
    .below { flex: 1; min-height: 0; display: flex; overflow: hidden; }
    main { flex: 1; min-width: 0; padding: 0 25px 0 28px; font-size: 15px; }
    .intro { display: flex; justify-content: space-between; align-items: flex-start; height: 72px; }
    .title { display: flex; gap: 10px; align-items: center; margin-top: 25px; }
    h1 { margin: 0; font-size: 27px; line-height: 38px; font-weight: 400; color: #1d2327; white-space: nowrap; }
    .new { height: 38px; padding: 0 15px; display: inline-flex; align-items: center; border: 1px solid #2271b1; border-radius: 4px; background: #f6f7f7; color: #2271b1; }
    .options { height: 38px; border: 1px solid #c3c4c7; border-top: 0; border-radius: 0 0 5px 5px; background: #fff; color: #646970; padding: 0 15px 0 21px; gap: 6px; }
    .notice { display: flex; justify-content: space-between; align-items: flex-start; background: #fff; border: 1px solid #c3c4c7; border-left: 5px solid #72aee6; padding: 13px 15px 10px 17px; line-height: 25px; margin-bottom: 31px; }
    .notice p { margin: 0 0 12px; }
    .notice a { color: #2271b1; text-decoration: underline; }
    .notice button { color: #787c82; }
    .cols { display: grid; grid-template-columns: minmax(0, 1fr) 350px; gap: 25px; align-items: start; }
    .name { display: block; width: 100%; height: 47px; border: 1px solid #8c8f94; background: #fff; color: #2c3338; font-size: 26px; padding: 0 10px; margin-bottom: 41px; }
    .scroll { width: 19px; flex: none; background: #fcfcfc; display: flex; flex-direction: column; align-items: center; color: #8b8b8b; padding: 4px 0 3px; }
    .thumb { width: 11px; height: 518px; border-radius: 6px; background: #8b8b8b; margin: 5px 0 auto; }
  `];

  @state() private postTitle = "Quienes somos";

  render() {
    return html`
      <browser-chrome></browser-chrome>
      <div class="page">
        <div class="site">
          <admin-bar></admin-bar>
          <div class="below">
            <admin-menu></admin-menu>
            <main>
              <div class="intro">
                <div class="title"><h1>Editar diseño</h1><a class="new" href="#">Añadir nuevo diseño</a></div>
                <button class="options" type="button">Opciones de pantalla ${icon(p("M5 6h10l-5 8z"), 20)}</button>
              </div>
              <div class="notice">
                <div><p>¿Estás disfrutando Duplicator?</p><a href="#">Sí</a><br /><a href="#">Realmente no</a></div>
                <button type="button" aria-label="Descartar">${icon(A.dismiss)}</button>
              </div>
              <div class="cols">
                <div>
                  <input class="name" aria-label="Título" .value=${this.postTitle} @input=${(e: Event) => (this.postTitle = (e.target as HTMLInputElement).value)} />
                  <divi-builder></divi-builder>
                </div>
                <meta-boxes></meta-boxes>
              </div>
            </main>
          </div>
        </div>
        <div class="scroll" aria-hidden="true">
          ${icon(p("M10 3l9 13H1z"), 14)}
          <div class="thumb"></div>
          ${icon(p("M10 17l9-13H1z"), 14)}
        </div>
      </div>
      <task-bar></task-bar>`;
  }
}
